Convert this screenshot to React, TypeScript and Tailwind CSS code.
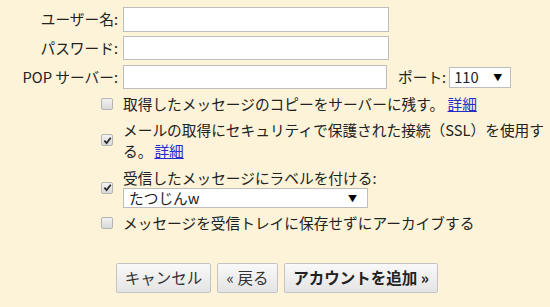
import React from 'react';

const font = { fontFamily: '"Noto Sans CJK JP", "Noto Sans", sans-serif' };

const Box = ({ checked }: { checked?: boolean }) => (
    <span className="flex size-[12px] shrink-0 items-center justify-center rounded-[2px] border border-[#b4b4b4] bg-gradient-to-b from-[#f2f2f2] to-[#d9d9d9]">
        {checked && (
            <svg viewBox="0 0 10 10" className="size-[9px]">
                <path d="M1.5 5.2 L4 7.8 L8.6 2" fill="none" stroke="#2a2a2a" strokeWidth="2" />
            </svg>
        )}
    </span>
);

const Arrow = () => <span className="text-[9px] leading-none text-black">▼</span>;

const App = () => {
    return (
        <div className="h-[307px] w-[550px] overflow-hidden bg-[#fcf3d8] text-[14.7px] text-[#222]" style={font}>
            {/* Account fields */}
            <div className="grid grid-cols-[118px_auto] items-center gap-x-[5px] pt-[7px]">
                <div className="text-right leading-none">ユーザー名:</div>
                <input className="h-[25px] w-[266px] border border-[#bdbdbd] bg-white outline-none" />
                <div className="mt-[4px] text-right leading-none">パスワード:</div>
                <input type="password" className="mt-[4px] h-[24px] w-[266px] border border-[#bdbdbd] bg-white outline-none" />
                <div className="mt-[5px] text-right leading-none">POP サーバー:</div>
                <div className="mt-[5px] flex items-center">
                    <input className="h-[24px] w-[264px] border border-[#bdbdbd] bg-white outline-none" />
                    <span className="ml-[11px] leading-none">ポート:</span>
                    <div className="ml-[3px] flex h-[21px] w-[62px] items-center justify-between border border-[#bdbdbd] bg-white pl-[4px] pr-[8px]">
                        <span className="leading-none">110</span>
                        <Arrow />
                    </div>
                </div>
            </div>

            {/* Options */}
            <div className="mt-[4px] flex flex-col pl-[101px] leading-[21px]">
                <div className="flex items-center gap-[10px]">
                    <Box />
                    <div>
                        取得したメッセージのコピーをサーバーに残す。 <a className="text-[#2a2acc] underline">詳細</a>
                    </div>
                </div>
                <div className="mt-[5px] flex items-center gap-[10px]">
                    <Box checked />
                    <div className="w-[427px]">
                        <div>メールの取得にセキュリティで保護された接続（SSL）を使用す</div>
                        <div>
                            る。<a className="ml-[2px] text-[#2a2acc] underline">詳細</a>
                        </div>
                    </div>
                </div>
                <div className="mt-[6px] flex items-center gap-[10px]">
                    <Box checked />
                    <div>
                        <div>受信したメッセージにラベルを付ける:</div>
                        <div className="flex h-[20px] w-[245px] items-center justify-between border border-[#bdbdbd] bg-white pl-[5px] pr-[10px]">
                            <span className="leading-none">たつじんw</span>
                            <Arrow />
                        </div>
                    </div>
                </div>
                <div className="mt-[4px] flex items-center gap-[10px]">
                    <Box />
                    <div>メッセージを受信トレイに保存せずにアーカイブする</div>
                </div>
            </div>

            {/* Buttons */}
            <div className="mt-[30px] flex gap-[6px] pl-[116px]">
                <button className="h-[30px] w-[95px] rounded-[2px] border border-[#c4c4c4] bg-gradient-to-b from-[#f9f9f9] to-[#e4e4e4] text-[15.5px] text-[#333]">
                    キャンセル
                </button>
                <button className="h-[30px] w-[61px] rounded-[2px] border border-[#c4c4c4] bg-gradient-to-b from-[#f9f9f9] to-[#e4e4e4] text-[15.5px] text-[#333]">
                    « 戻る
                </button>
                <button className="h-[30px] w-[154px] rounded-[2px] border border-[#c4c4c4] bg-gradient-to-b from-[#f9f9f9] to-[#e4e4e4] text-[15.5px] font-bold text-[#222]">
                    アカウントを追加 »
                </button>
            </div>
        </div>
    );
};

export default App;
